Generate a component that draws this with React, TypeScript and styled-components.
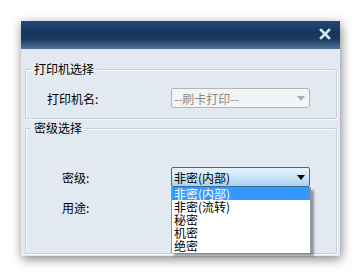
import styled, { createGlobalStyle } from 'styled-components';

const GlobalStyle = createGlobalStyle`
  html, body {
    margin: 0;
    padding: 0;
    background: #ffffff;
  }
  body {
    font-family: "Noto Sans CJK SC", "Liberation Sans", sans-serif;
    font-size: 12px;
  }
`;

const Page = styled.div`
  width: 361px;
  height: 277px;
  padding: 21px 0 0 21px;
  box-sizing: border-box;
`;

const Dialog = styled.div`
  width: 319px;
  height: 235px;
  display: flex;
  flex-direction: column;
  background: #e3e9f1;
  box-shadow: 1px 3px 10px rgba(0, 0, 0, 0.5);
`;

const TitleBar = styled.div`
  height: 28px;
  flex: none;
  display: flex;
  align-items: center;
  justify-content: flex-end;
  padding-right: 9px;
  background: linear-gradient(#25497a 0%, #15355c 40%, #19395f 65%, #50739b 100%);
`;

const CloseButton = styled.svg`
  width: 12px;
  height: 12px;
  margin-top: -2px;
`;

const Body = styled.div`
  flex: 1;
  display: flex;
  flex-direction: column;
  gap: 1px;
  padding: 12px 3px 2px 4px;
`;

const Group = styled.fieldset<{ $height: number }>`
  margin: 0;
  padding: 0;
  height: ${({ $height }) => $height}px;
  flex: none;
  box-sizing: border-box;
  border: 1px solid #c4cfdc;
  border-radius: 2px;
  box-shadow: inset 1px 1px 0 #f6f9fc, 1px 1px 0 #f6f9fc;
  position: relative;
`;

const Legend = styled.legend`
  margin-left: 5px;
  padding: 0 3px;
  font-size: 12px;
  line-height: 16px;
  color: #000;
`;

const Row = styled.div<{ $top: number }>`
  display: flex;
  align-items: center;
  height: 20px;
  margin-top: ${({ $top }) => $top}px;
`;

const Label = styled.span<{ $indent: number }>`
  width: ${({ $indent }) => 145 - $indent}px;
  padding-left: ${({ $indent }) => $indent}px;
  font-size: 12px;
  color: #000;
  white-space: nowrap;
`;

const SelectBox = styled.div<{ $disabled?: boolean }>`
  position: relative;
  width: 139px;
  height: 20px;
  box-sizing: border-box;
  display: flex;
  align-items: center;
  justify-content: space-between;
  padding: 0 4px 0 2px;
  border-radius: 2px;
  font-size: 12px;
  border: 1px solid ${({ $disabled }) => ($disabled ? '#b2b6bb' : '#3b6b90')};
  background: ${({ $disabled }) =>
    $disabled ? '#f3f4f5' : 'linear-gradient(#e6f4fc 0%, #cfe8f8 45%, #a5d2f0 100%)'};
  color: ${({ $disabled }) => ($disabled ? '#8a8a8a' : '#000')};
`;

const Arrow = styled.span<{ $disabled?: boolean }>`
  width: 0;
  height: 0;
  border-left: 4px solid transparent;
  border-right: 4px solid transparent;
  border-top: 5px solid ${({ $disabled }) => ($disabled ? '#a9adb2' : '#000')};
`;

const DropList = styled.div`
  position: absolute;
  top: 19px;
  left: -1px;
  width: 140px;
  box-sizing: border-box;
  background: #ffffff;
  border-left: 1px solid #8a9aa8;
  border-right: 1px solid #8a9aa8;
  box-shadow: 3px 3px 2px rgba(0, 0, 0, 0.35);
  padding-bottom: 1px;
  z-index: 5;
`;

const Option = styled.div<{ $active?: boolean }>`
  height: 13px;
  line-height: 13px;
  padding-left: 2px;
  font-size: 12px;
  white-space: nowrap;
  background: ${({ $active }) => ($active ? '#3399ff' : 'transparent')};
  color: ${({ $active }) => ($active ? '#ffffff' : '#000')};
`;

const levels = ['非密(内部)', '非密(流转)', '秘密', '机密', '绝密'];

export default function App() {
  return (
    <>
      <GlobalStyle />
      <Page>
        <Dialog>
          <TitleBar>
            <CloseButton viewBox="0 0 12 12">
              <path d="M2 2 L10 10 M10 2 L2 10" stroke="#d2e8f6" strokeWidth="2.6" strokeLinecap="square" />
            </CloseButton>
          </TitleBar>
          <Body>
            <Group $height={58}>
              <Legend>打印机选择</Legend>
              <Row $top={11}>
                <Label $indent={21}>打印机名:</Label>
                <SelectBox $disabled>
                  <span>--刷卡打印--</span>
                  <Arrow $disabled />
                </SelectBox>
              </Row>
            </Group>
            <Group $height={134}>
              <Legend>密级选择</Legend>
              <Row $top={31}>
                <Label $indent={36}>密级:</Label>
                <SelectBox>
                  <span>非密(内部)</span>
                  <Arrow />
                  <DropList>
                    {levels.map((l, i) => (
                      <Option key={l} $active={i === 0}>{l}</Option>
                    ))}
                  </DropList>
                </SelectBox>
              </Row>
              <Row $top={10}>
                <Label $indent={36}>用途:</Label>
              </Row>
            </Group>
          </Body>
        </Dialog>
      </Page>
    </>
  );
}
